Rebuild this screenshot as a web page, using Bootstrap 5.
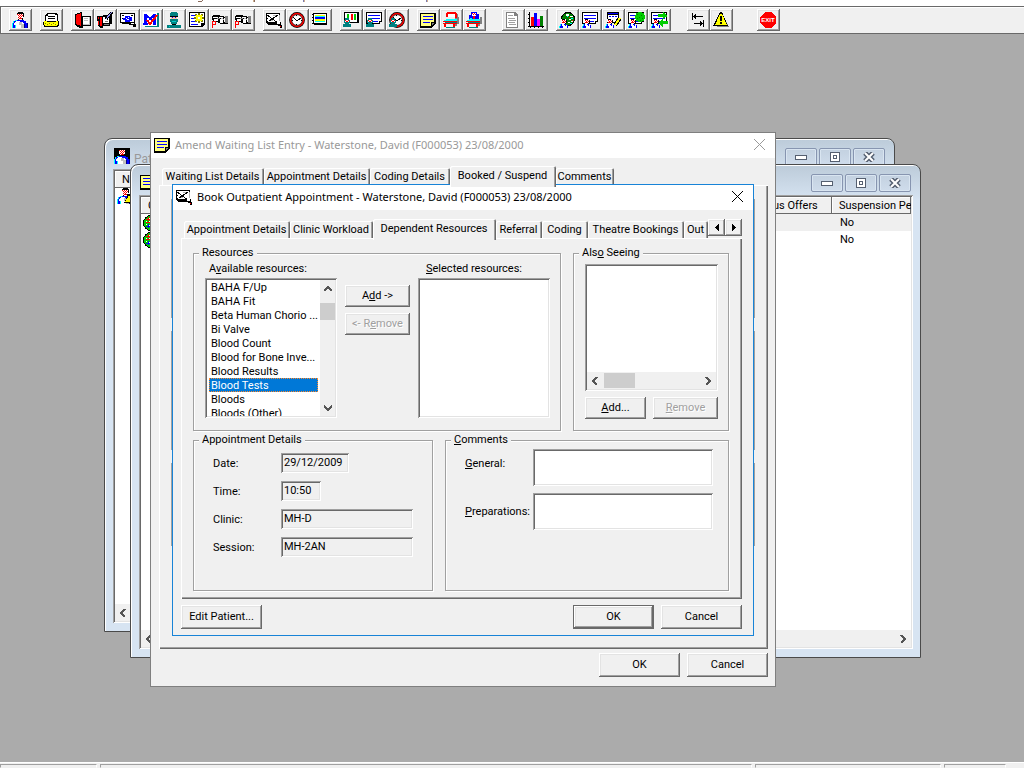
<!DOCTYPE html>
<html lang="en">
<head>
<meta charset="utf-8">
<meta name="viewport" content="width=device-width, initial-scale=1">
<title>Book Outpatient Appointment</title>
<link href="https://cdn.jsdelivr.net/npm/bootstrap@5.3.0/dist/css/bootstrap.min.css" rel="stylesheet">
<style>
  :root { --face:#f0f0f0; --shade:#a0a0a0; --dark:#696969; --lite:#e3e3e3; --frame:#d7e4f2; --accent:#1883d7; }
  body { font:11px/14px Roboto,"Liberation Sans",sans-serif; color:#000; background:#ababab; overflow:hidden; }
  button, input, textarea, select { font:inherit; color:inherit; border-radius:0; }
  svg { shape-rendering:crispEdges; display:block; flex:none; }
  u { text-underline-offset:1px; }

  /* bevels */
  .raised { background:var(--face); border:0; padding:0 6px; white-space:nowrap; box-shadow:inset -1px -1px 0 var(--dark), inset 1px 1px 0 #fff, inset -2px -2px 0 var(--shade), inset 2px 2px 0 var(--lite); }
  .raised:disabled { color:var(--shade); text-shadow:1px 1px 0 #fff; }
  .raised.default { border:1px solid var(--dark); }
  .sunken { border:0; padding:2px; box-shadow:inset 1px 1px 0 var(--shade), inset -1px -1px 0 #fff, inset 2px 2px 0 var(--dark), inset -2px -2px 0 var(--lite); }

  /* application chrome */
  .menu-strip { height:6px; background:#fff; }
  .tool-strip { background:var(--face); border:1px solid var(--dark); border-right:0; padding:2px 8px; height:28px; box-shadow:inset 1px 1px 0 #fff; }
  .tool { width:23px; height:22px; padding:3px; }
  .sp { margin-left:8px; } .sp2 { margin-left:16px; } .sp3 { margin-left:24px; }
  .status-strip { height:6px; background:var(--face); border-top:1px solid #fff; padding:1px 18px 0 0; gap:3px; }
  .status-strip span { border:1px solid; border-color:var(--shade) #fff transparent var(--shade); }
  .w-s { width:97px; } .w-m { width:186px; } .w-x { width:62px; }

  /* child windows */
  .win { position:absolute; display:flex; flex-direction:column; }
  .mdi { width:791px; height:494px; background:var(--frame); border:1px solid #4a4a4a; border-radius:8px 8px 0 0; padding:0 7px 8px 8px; box-shadow:inset 1px 1px 0 #fff; background-image:linear-gradient(#bccbd9,#d7e4f2 36px); background-repeat:no-repeat; overflow:hidden; }
  .mdi-bar { height:30px; padding:9px 2px 0 1px; color:#999; gap:4px; font-size:12px; }
  .cap-btn { width:32px; height:18px; border:1px solid #8795b0; border-radius:2px; background:linear-gradient(#c3d1e0,#cfdceb); padding:0; display:grid; place-items:center; box-shadow:inset 0 0 0 1px #d9e5f1; }
  .mdi-body { background:#fff; flex:1; min-height:0; overflow:hidden; display:flex; flex-direction:column; }
  .grid-tbl { table-layout:fixed; width:100%; border-collapse:separate; border-spacing:0; }
  .grid-tbl th { height:17px; padding:0 7px; font-weight:400; background:var(--face); box-shadow:inset -1px -1px 0 var(--dark), inset 1px 1px 0 #fff; white-space:nowrap; overflow:hidden; }
  .grid-tbl td { height:17px; padding:0 8px; vertical-align:middle; }
  .grid-tbl td:first-child { padding:0 2px; }
  .alt { background:#efefef; }
  .h-scroll { height:17px; background:var(--face); display:flex; align-items:center; justify-content:space-between; padding:0 4px; }

  .dlg { background:var(--face); border:1px solid #7f7f7f; }
  .dlg-bar { background:#fff; height:25px; padding:0 10px 2px 3px; font:11px/14px "Noto Sans",sans-serif; gap:5px; }
  .dlg-bar button { background:none; border:0; padding:0; }
  .off { color:#999; }
  .amend { left:150px; top:98px; width:626px; height:555px; }
  .book { left:172px; top:150px; width:582px; height:452px; border-color:var(--accent); }

  .nav-tabs { border:0; height:19px; align-items:flex-end; flex-wrap:nowrap; position:relative; }
  .nav-tabs .nav-link { height:17px; margin:0; padding:1px 2px 0 1px; border:0; border-radius:2px 2px 0 0; color:#000; background:var(--face); white-space:nowrap; text-align:center; flex:none; box-shadow:inset 1px 1px 0 #fff, inset -1px 0 0 var(--dark), inset -2px 0 0 var(--shade); }
  .nav-tabs .nav-link.active { height:21px; margin:0 0 -2px; padding:1px 2px 3px 1px; z-index:1; background:var(--face); color:#000; }
  .t1 { width:102px; } .t2 { width:106px; } .t3 { width:80px; } .t4 { width:58px; } .t5 { width:83px; } .t6 { width:123px; } .t7 { width:46px; } .t8 { width:96px; } .t9 { width:24px; }
  .spin { width:17px; height:17px; padding:0; display:grid; place-items:center; }
  .page { box-shadow:inset 1px 1px 0 #fff, inset -1px -1px 0 var(--dark), inset -2px -2px 0 var(--shade); }

  fieldset { min-width:0; position:relative; border:1px solid var(--shade); box-shadow:1px 1px 0 #fff, inset 1px 1px 0 #fff; }
  legend { float:none; width:auto; margin:0 0 0 5px; padding:0 3px; font-size:11px; line-height:14px; background:var(--face); }
  .strip { border:1px solid var(--shade); }
  .fs-top { height:185px; } .fs-low { height:158px; }

  .lst { display:flex; background:#fff; width:132px; height:140px; margin-top:2px; }
  .lst.wide { height:127px; width:133px; margin-top:0; flex-direction:column; justify-content:flex-end; }
  .lst select { border:0; outline:0; padding:0 2px; background:#fff; flex:1; min-width:0; overflow:hidden; height:136px; scrollbar-width:none; }
  .lst select::-webkit-scrollbar { display:none; }
  .lst option { padding:1px 0 0 2px; min-height:0; height:14px; line-height:13px; font-size:11px; }
  .lst option:checked { background:linear-gradient(#0078d7,#0078d7); -webkit-text-fill-color:#fff; outline:1px dotted #ff8728; outline-offset:-1px; }
  .v-scroll { width:15px; background:var(--face); display:flex; flex-direction:column; align-items:center; justify-content:space-between; padding:5px 0 4px; position:relative; }
  .v-scroll i { position:absolute; top:23px; left:0; width:15px; height:17px; background:#cdcdcd; }
  .h-scroll i { width:31px; height:15px; background:#cdcdcd; margin:0 auto 0 5px; }
  .b-sm { height:22px; width:65px; } .b-md { height:24px; width:81px; }
  .f-row { display:grid; grid-template-columns:68px 1fr; align-items:center; height:20px; margin-bottom:8px; }
  .f-row label { padding-top:2px; }
  .f-row input { height:20px; background:var(--face); padding:0 2px 1px 3px; }
  .c-row { display:grid; grid-template-columns:68px 180px; align-items:center; margin-bottom:7px; }
  .c-row:first-child label { padding-bottom:7px; }
  .c-row textarea { height:37px; resize:none; background:#fff; }
  .in-date { width:68px; } .in-time { width:40px; } .in-long { width:132px; }
</style>
</head>
<body class="vh-100 d-flex flex-column">

<svg width="0" height="0" class="position-absolute" aria-hidden="true">
  <defs>
    <symbol id="doctor" viewBox="0 0 16 16"><path fill="#00f" d="M4 8h8v1h2v2h1v5H1v-5h1V9h2z"/><path fill="#0ff" d="M0 11h1v5H0zM1 9h1v2H1zM3 8h2v1H3zM3 13h1v3H3z"/><path fill="#fff" d="M4 9h3l3 3 1-3 1 3v4H4v-3H2v-2z"/><path fill="#c0c0c0" d="M7 10h3v2h2v4H9v-3H7z"/><path fill="#fff" d="M5 1h6v6H6V6H5z"/><path fill="#f00" d="M5 2h1v1H5zM7 2h1v1H7zM9 2h1v1H9zM6 3h1v1H6zM8 3h1v1H8zM10 3h1v1h-1zM7 4h1v1H7zM9 4h1v1H9zM6 5h1v1H6zM8 5h1v1H8zM7 6h3v1H7z"/><path d="M6 0h5v1h1v4h-1V2H5V1h1zM6 7h1v1H6zM10 6h1v2h-1z"/><path fill="#000080" d="M15 11h1v5h-1zM12 12h1v4h-1z"/></symbol>
    <symbol id="mini" viewBox="0 0 9 9"><path fill="#fff" d="M2 0h5v5H3z"/><path fill="#f00" d="M3 1h1v1H3zM5 1h1v1H5zM4 2h1v1H4zM6 2h1v1H6zM3 3h3v1H3z"/><path fill="#00f" d="M2 5h5v1h2v3H1V6h1z"/><path fill="#0ff" d="M0 7h1v2H0zM1 5h1v2H1z"/><path fill="#fff" d="M3 5h1l3 3V6h1v3H4z"/><path d="M3 0h3v1H3zM7 1h1v3H7zM6 4h1v1H6z"/></symbol>
    <symbol id="mask" viewBox="0 0 8 9"><path fill="#008080" d="M2 0h4v2h1v3H6v1h2v3H0V6h2V5H1V2h1z"/><path fill="#fff" d="M2 2h4v2H2z"/><path fill="#f00" d="M2 2h1v1H2zM5 2h1v1H5zM3 3h2v1H3z"/></symbol>
    <symbol id="note" viewBox="0 0 16 16"><path d="M0 1h16v10l-4 5H0z"/><path fill="#ffff80" d="M1 2h13v8h-3v4H1z"/><path fill="#00f" d="M3 4h10v1H3zM3 7h10v1H3zM3 10h7v1H3z"/><path fill="#808080" d="M12 11h2v1h-1v1h-1z"/></symbol>
    <symbol id="sheet" viewBox="0 0 16 13"><path d="M0 0h16v10h-2v2H0z"/><path fill="#fff" d="M1 1h14v8h-2v2H1z"/><path fill="#00f" d="M2 3h12v1H2zM2 6h12v1H2zM7 9h5v1H7z"/></symbol>
    <symbol id="clock" viewBox="0 0 16 16"><g shape-rendering="auto"><circle cx="8" cy="8" r="7.9"/><circle cx="8" cy="8" r="7.2" fill="#f00"/><circle cx="8" cy="8" r="5.4" fill="#fff" stroke="#000" stroke-width=".7"/></g><path fill="none" stroke="#000" d="M4 5l4 4 4-3"/><path d="M7 3h1v1H7zM7 12h1v1H7zM3 8h1v1H3zM12 8h1v1h-1z"/></symbol>
    <symbol id="hand" viewBox="0 0 16 16"><path d="M0 4h2v1H0zM1 3h7v1h4v1h4v7H8v-1H6v-1H1V8H0V5z"/><path fill="#fff" d="M1 5h5v1H1zM2 7h4v2H2zM7 5h4v1H7zM8 7h3v4H8zM12 6h1v4h-1z"/><path fill="#808080" d="M13 4h3v7h-3zM5 6h3v1H5z"/><path fill="#c0c0c0" d="M11 7h1v1h-1zM9 6h2v1H9z"/><path fill="#f0f0f0" d="M0 9h4v6H0z"/><path fill="#f00" d="M0 9h4v4H1v3H0zM1 10v2h2v-2z"/></symbol>
    <symbol id="pencilpad" viewBox="0 0 16 16"><path d="M0 1h14v9h1v3h1v3h-2v-2h-2v-1H2v-1H1v-1H0z"/><path fill="#fff" d="M1 2h12v8H2V9H1z"/><path fill="#b0b0b0" d="M7 3h4v1H7zM3 8h4v1H3zM13 3h1v7h-1z"/><path stroke="#000" fill="none" d="M1 3l11 8M12 3L3 9"/><path d="M1 3h1v1H1zM1 6h1v1H1z"/><path fill="#fff" d="M11 7h1v2h2v3h-3z"/><path fill="#f00" d="M14 14h1v1h-1z"/></symbol>
    <symbol id="bed" viewBox="0 0 16 16"><path fill="#808080" d="M14 5h2v7h-2v2h-3v-2h3z"/><path fill="#f00" d="M0 9h14v1H0zM0 11h14v1H0zM1 12h2v3H1zM10 12h2v3h-2z"/><path fill="#0ff" d="M3 7h11v2H1V8h2z"/><path fill="#008080" d="M2 10h12v1H2zM3 15h9v1H3z"/></symbol>
    <symbol id="ball" viewBox="0 0 16 16"><circle cx="8" cy="8" r="8"/><circle cx="8" cy="8" r="7" fill="#0c0"/><path fill="#f00" d="M5 2h1v4H5zM8 1h1v5H8zM11 2h1v4h-1zM3 4h10v1H3zM3 7h10v1H3z"/><path fill="#00f" d="M5 9h1v4H5zM8 9h1v5H8zM11 9h1v4h-1zM3 11h10v1H3z"/><path fill="#fff" d="M6 3h1v1H6zM9 3h1v1H9zM3 6h1v1H3zM6 6h1v1H6zM9 6h1v1H9zM12 6h1v1h-1zM3 9h1v1H3zM6 10h1v1H6zM9 10h1v1H9z"/></symbol>
    <symbol id="a-l" viewBox="0 0 8 8"><path fill="none" stroke="#555" stroke-width="2" d="M6 0L2 4l4 4"/></symbol>
  </defs>
</svg>

<div class="menu-strip flex-shrink-0"><svg width="440" height="3" aria-hidden="true"><path fill="#8a6a5a" d="M198 1h4v1h-4zM202 0h1v1h-1zM254 0h1v2h-1z"/><path fill="#7a7ab0" d="M303 0h1v2h-1zM426 0h1v2h-1z"/><path fill="#d0b090" d="M253 0h1v2h-1zM304 0h1v2h-1zM427 0h1v2h-1z"/></svg></div>

<div class="tool-strip d-flex flex-shrink-0" role="toolbar" aria-label="Main">
  <button class="raised tool" aria-label="Patient"><svg width="16" height="16"><use href="#doctor"/></svg></button>
  <button class="raised tool sp" aria-label="Card index"><svg width="16" height="16"><path d="M4 1h9l2 2v6h1v4l-2 2H1l-1-4 1-2h1V3h2z"/><path fill="#fff" d="M5 2h7v1h2v6H3V4h2z"/><path d="M5 4h7v1H5zM5 6h7v1H5zM3 2h1v2H3z"/><path fill="#ff0" d="M1 9h2l1 1h8l1-1h2v3l-1 2H2l-1-3z"/><path fill="#808000" d="M2 11h1v1H2zM4 12h1v1H4zM6 11h1v1H6zM8 12h1v1H8zM10 11h1v1h-1zM12 12h1v1h-1z"/></svg></button>
  <button class="raised tool sp" aria-label="Records"><svg width="17" height="16"><path d="M1 2l6-2h1v4h9v10H9v2H6l-5-3z"/><path fill="#f00" d="M2 3l5-2v13l-5-2z"/><path fill="#fff" d="M9 5h6v7H9z"/><path fill="#c0c0c0" d="M10 6h4v1h-4zM10 8h4v1h-4zM15 5h1v8H9v-1h6z"/></svg></button>
  <button class="raised tool" aria-label="Edit record"><svg width="16" height="16"><path d="M0 4h6V3h9v9h-2v2H6v2H4l-3-2V9H0z"/><path fill="#fff" d="M6 5h6v6H6z"/><path fill="#f00" d="M1 5h1v2H1zM3 5h2v9H3zM1 9h1v4H1z"/><path fill="#808080" d="M8 9h3v1H8zM7 12h5v1H7z"/><path fill="none" stroke="#000" stroke-width="3" d="M15 0L9 7"/><path fill="none" stroke="#99f" d="M15 0L9 7"/></svg></button>
  <button class="raised tool" aria-label="View notes"><svg width="16" height="16"><path d="M0 1h15v11h1v3h-3v-2H9v-1H2v-1H0z"/><path fill="#fff" d="M1 2h13v8H1z"/><path d="M2 3h2v1H2zM11 3h2v1h-2zM2 6h1v1H2z"/><path fill="#00f" d="M5 4h5v1h2v4h-2v1H5V8H3V6h2z"/><path fill="#fff" d="M6 6h1v1H6zM8 5h1v1H8zM7 7h2v1H7zM11 11h3v1h-3z"/></svg></button>
  <button class="raised tool" aria-label="Master index"><svg width="16" height="16"><path fill="#008080" d="M2 1h14v14H2z"/><path fill="#fff" d="M0 0h14v14H0z"/><path fill="#00f" d="M1 2h3v1h1v1h1v1h2V4h1V3h1V2h3v11h-3V6H9v2H6V6H4v5h1v2H0v-2h1z"/><path fill="none" stroke="#f00" stroke-width="2" d="M4 8l3 4 7-9"/></svg></button>
  <button class="raised tool" aria-label="Surgeon"><svg width="16" height="16"><path fill="#008080" d="M5 0h6v1h1v3H4V1h1z"/><path d="M4 4h8v1H4z"/><path fill="#ffc0a0" d="M5 5h6v2H5z"/><path fill="#00f" d="M6 5h1v1H6zM9 5h1v1H9z"/><path fill="#008080" d="M4 7h8v3h-1v2H5v-2H4z"/><path d="M6 12h4v1H6z"/><path fill="#008080" d="M1 13h14v3H1z"/><path fill="#0cc" d="M6 9h4v1H6zM3 14h1v1H3z"/></svg></button>
  <button class="raised tool" aria-label="New entry"><svg width="16" height="16"><path d="M0 0h16v12l-3 3H0z"/><path fill="#fff" d="M1 1h14v10h-3v3H1z"/><path fill="#00f" d="M2 3h4v1H2zM2 6h3v1H2zM2 9h4v1H2zM2 12h7v1H2z"/><path fill="#808000" d="M9 1h2v10H9zM5 5h10v2H5zM6 2h2v2H6zM12 2h2v2h-2zM6 8h2v2H6zM12 8h2v2h-2z"/><path fill="#ff0" d="M7 3h6v6H7z"/><path fill="#fff" d="M9 5h2v2H9z"/></svg></button>
  <button class="raised tool" aria-label="Referral"><svg width="16" height="16"><use href="#hand"/></svg></button>
  <button class="raised tool" aria-label="Previous referral"><svg width="16" height="16"><use href="#hand"/></svg></button>

  <button class="raised tool sp" aria-label="Book appointment"><svg width="16" height="16"><use href="#pencilpad"/></svg></button>
  <button class="raised tool" aria-label="Clock"><svg width="16" height="16"><use href="#clock"/></svg></button>
  <button class="raised tool" aria-label="Schedule"><svg width="16" height="16"><path d="M1 1h14v12H2v-1H0v-1h1V9H0V8h1V6H0V5h1V3H0V2h1z"/><path fill="#fff" d="M2 2h12v9H2z"/><path fill="#ff0" d="M3 3h10v1H3zM3 7h10v2H3z"/><path fill="#0ff" d="M3 4h10v1H3zM3 9h10v1H3z"/><path fill="#00f" d="M3 5h10v2H3z"/></svg></button>

  <button class="raised tool sp" aria-label="Theatre planner"><svg width="16" height="16"><path d="M1 0h15v11H1z"/><path fill="#fff" d="M2 1h12v9H2z"/><path fill="#0c0" d="M4 2h2v4H4zM11 2h2v6h-2z"/><path fill="#f00" d="M8 2h2v6H8z"/><use href="#mask" x="0" y="6" width="8" height="9"/></svg></button>
  <button class="raised tool" aria-label="Theatre list"><svg width="16" height="16"><use href="#sheet" width="16" height="13"/><use href="#mask" y="6" width="8" height="9"/></svg></button>
  <button class="raised tool" aria-label="Theatre times"><svg width="16" height="16"><use href="#clock"/><use href="#mask" y="6" width="8" height="9"/></svg></button>

  <button class="raised tool sp" aria-label="Waiting list"><svg width="16" height="16"><use href="#note"/></svg></button>
  <button class="raised tool" aria-label="Beds"><svg width="16" height="16"><path fill="#808080" d="M12 2h3v5h-3z"/><path fill="#f00" d="M4 0h9v1h1v5h-2V2H5v3H3V1h1z"/><path fill="#fff" d="M5 2h7v3H5z"/><use href="#bed"/></svg></button>
  <button class="raised tool" aria-label="Admit"><svg width="16" height="16"><use href="#bed"/><path fill="#00f" d="M5 0h6v2h2v5H3V3h2z"/><path fill="#fff" d="M6 1h4v3H6z"/><path fill="#f00" d="M6 1h1v1H6zM8 1h1v1H8zM7 2h1v1H7zM9 2h1v1H9zM7 4h2v3H7z"/><path fill="#0ff" d="M4 6h2v1H4z"/></svg></button>

  <button class="raised tool sp2" aria-label="Document"><svg width="16" height="16"><path fill="#808080" d="M1 0h9l3 3v13H1z"/><path fill="#fff" d="M2 1h7v3h3v11H2z"/><path fill="#a0a0a0" d="M3 3h5v1H3zM3 6h7v1H3zM4 8h7v1H4zM3 10h7v1H3zM4 12h7v1H4z"/></svg></button>
  <button class="raised tool" aria-label="Statistics"><svg width="16" height="16"><path d="M1 0h1v14h14v1h-1v1h-1v-1h-3v1h-1v-1H7v1H6v-1H3v1H2v-1H0v-1h1v-3H0v-1h1V7H0V6h1V3H0V2h1z"/><path fill="#f00" d="M3 5h3v9H3z"/><path fill="#00f" d="M6 1h3v13H6z"/><path fill="#f0f" d="M9 7h3v7H9z"/><path fill="#008000" d="M12 4h3v10h-3z"/></svg></button>

  <button class="raised tool sp" aria-label="Patient map"><svg width="16" height="16"><circle cx="9" cy="7" r="7"/><circle cx="9" cy="7" r="6" fill="#008000"/><path fill="#fff" d="M7 2h3v2H7zM11 4h3v1h-3zM10 7h2v1h-2zM12 9h2v1h-2zM9 10h2v1H9z"/><path fill="#0ff" d="M8 4h1v1H8zM12 6h2v1h-2zM11 11h2v1h-2z"/><path fill="#f00" d="M10 5h1v1h-1zM13 8h1v1h-1z"/><use href="#mini" y="7" width="9" height="9"/></svg></button>
  <button class="raised tool" aria-label="Patient list"><svg width="16" height="16"><use href="#sheet" width="16" height="13"/><use href="#mini" y="7" width="9" height="9"/></svg></button>
  <button class="raised tool" aria-label="Edit patient list"><svg width="16" height="16"><path d="M2 0h12v11H2z"/><path fill="#fff" d="M3 3h10v7H3z"/><path fill="#00f" d="M3 1h10v1H3zM4 4h2v1H4zM7 4h2v1H7zM10 4h2v1h-2z"/><path stroke="#000" stroke-width="4" d="M15 6l-5 7"/><path stroke="#ff0" stroke-width="2" d="M15 6l-5 7"/><use href="#mini" y="7" width="9" height="9"/></svg></button>
  <button class="raised tool" aria-label="Patient offers"><svg width="17" height="16"><use href="#sheet" width="16" height="13"/><circle cx="12" cy="5" r="5" fill="#0c0"/><path fill="#008000" d="M9 2h1v1H9zM13 3h1v1h-1zM11 5h1v1h-1zM14 6h1v1h-1zM12 8h1v1h-1zM9 6h1v1H9z"/><use href="#mini" y="7" width="9" height="9"/></svg></button>
  <button class="raised tool" aria-label="Transfer patient"><svg width="17" height="16"><use href="#sheet" width="16" height="13"/><path fill="#0c0" d="M7 2h5V0l5 4-5 3V5H7zM17 9h-5V7l-5 4 5 4v-3h5z"/><use href="#mini" y="7" width="9" height="9"/></svg></button>

  <button class="raised tool sp2" aria-label="Switch"><svg width="16" height="16"><path d="M2 1h1v7H2zM3 4h1V3h1V2h1v2h7v1H6v2H5V6H4V5H3zM13 8h1v7h-1zM13 12h-1v1h-1v1h-1v-2H4v-1h6V9h1v1h1v1h1z"/></svg></button>
  <button class="raised tool" aria-label="Alerts"><svg width="16" height="16"><path fill="#808080" d="M9 2l7 13H4z"/><path d="M7 0h2l6 14H0z"/><path fill="#ff0" d="M7 2h2l5 11H2z"/><path d="M7 4h2v5H7zM7 10h2v2H7z"/></svg></button>
  <button class="raised tool sp3" aria-label="Exit"><svg width="16" height="16"><path fill="#f00" d="M5 0h6l5 5v6l-5 5H5l-5-5V5z"/><text x="8" y="10" fill="#fff" text-anchor="middle" font-family="Liberation Sans" font-weight="700" font-size="6">EXIT</text></svg></button>
</div>

<main class="flex-grow-1 position-relative overflow-hidden">

  <section class="win mdi" style="left:104px;top:104px">
    <div class="mdi-bar d-flex"><svg width="16" height="16"><path d="M0 0h16v16H0z"/><use href="#doctor" width="16" height="16"/></svg><span class="flex-grow-1 pt-1">Pat</span>
      <div class="d-flex" style="gap:2px"><button class="cap-btn" aria-label="Minimise"><svg width="12" height="5"><path fill="#555f70" d="M0 0h12v5H0z"/><path fill="#fff" d="M1 1h10v3H1z"/></svg></button><button class="cap-btn" aria-label="Restore"><svg width="12" height="10"><path fill="#555f70" d="M1 0h10v10H1z"/><path fill="#fff" d="M2 1h8v8H2z"/><path fill="#555f70" d="M4 3h4v4H4z"/><path fill="#fff" d="M5 4h2v2H5z"/></svg></button><button class="cap-btn" aria-label="Close window"><svg width="12" height="10"><g shape-rendering="auto"><path stroke="#555f70" stroke-width="5" d="M2 1l8 8M10 1L2 9"/><path stroke="#fff" stroke-width="2" d="M2 1l8 8M10 1L2 9"/></g></svg></button></div>
    </div>
    <div class="mdi-body sunken">
      <div class="flex-grow-1"><table class="grid-tbl"><thead><tr><th>N.</th></tr></thead><tbody><tr><td><svg width="17" height="17"><use href="#doctor" width="16" height="16"/><path d="M12 5l5 10H7z"/><path fill="#ff0" d="M12 7l4 7H8z"/></svg></td></tr></tbody></table></div>
      <div class="h-scroll"><svg width="8" height="8"><use href="#a-l"/></svg></div>
    </div>
  </section>

  <section class="win mdi" style="left:130px;top:130px">
    <div class="mdi-bar d-flex"><svg width="16" height="16"><use href="#note"/></svg><span class="flex-grow-1"></span>
      <div class="d-flex" style="gap:2px"><button class="cap-btn" aria-label="Minimise"><svg width="12" height="5"><path fill="#555f70" d="M0 0h12v5H0z"/><path fill="#fff" d="M1 1h10v3H1z"/></svg></button><button class="cap-btn" aria-label="Restore"><svg width="12" height="10"><path fill="#555f70" d="M1 0h10v10H1z"/><path fill="#fff" d="M2 1h8v8H2z"/><path fill="#555f70" d="M4 3h4v4H4z"/><path fill="#fff" d="M5 4h2v2H5z"/></svg></button><button class="cap-btn" aria-label="Close window"><svg width="12" height="10"><g shape-rendering="auto"><path stroke="#555f70" stroke-width="5" d="M2 1l8 8M10 1L2 9"/><path stroke="#fff" stroke-width="2" d="M2 1l8 8M10 1L2 9"/></g></svg></button></div>
    </div>
    <div class="mdi-body sunken">
      <div class="flex-grow-1"><table class="grid-tbl">
        <colgroup><col><col style="width:66px"><col style="width:79px"></colgroup>
        <thead><tr><th>C</th><th>us Offers</th><th class="pe-0">Suspension Pe</th></tr></thead>
        <tbody>
          <tr><td><svg width="16" height="16"><use href="#ball"/></svg></td><td class="alt"></td><td class="alt">No</td></tr>
          <tr><td><svg width="16" height="16"><use href="#ball"/></svg></td><td></td><td>No</td></tr>
        </tbody></table></div>
      <div class="h-scroll"><svg width="8" height="8"><use href="#a-l"/></svg><svg width="8" height="8"><use href="#a-l" transform="rotate(180 4 4)"/></svg></div>
    </div>
  </section>

  <section class="win dlg amend" role="dialog" aria-labelledby="t1">
    <div class="dlg-bar off d-flex align-items-center"><svg width="16" height="16"><use href="#note"/></svg><span id="t1" class="flex-grow-1">Amend Waiting List Entry - Waterstone, David (F000053) 23/08/2000</span><button aria-label="Close"><svg width="11" height="11"><path stroke="#999" d="M0 0l11 11M11 0L0 11" shape-rendering="auto"/></svg></button></div>
    <div class="d-flex flex-column flex-grow-1" style="padding:8px 7px 0 8px">
      <nav class="nav nav-tabs" style="padding-left:3px"><button class="nav-link t1">Waiting List Details</button><button class="nav-link t2">Appointment Details</button><button class="nav-link t3">Coding Details</button><button class="nav-link active t2">Booked / Suspend</button><button class="nav-link t4">Comments</button></nav>
      <div class="page flex-grow-1 d-flex flex-column" style="padding:14px 13px 103px 12px;gap:13px"><div class="strip flex-grow-1"></div><div class="strip flex-grow-1"></div><div class="strip" style="height:83px"></div></div>
      <div class="d-flex justify-content-end" style="gap:7px;padding:4px 0 9px"><button class="raised b-md">OK</button><button class="raised b-md">Cancel</button></div>
    </div>
  </section>

  <section class="win dlg book" role="dialog" aria-labelledby="t2">
    <div class="dlg-bar d-flex align-items-center"><svg width="16" height="16"><use href="#pencilpad"/></svg><span id="t2" class="flex-grow-1">Book Outpatient Appointment - Waterstone, David (F000053) 23/08/2000</span><button aria-label="Close"><svg width="11" height="11"><path stroke="#000" d="M0 0l11 11M11 0L0 11" shape-rendering="auto"/></svg></button></div>
    <div class="d-flex flex-column flex-grow-1" style="padding:9px 11px 6px 8px">
      <div class="d-flex">
        <nav class="nav nav-tabs flex-grow-1" style="min-width:0;padding-left:3px"><button class="nav-link t2">Appointment Details</button><button class="nav-link t5">Clinic Workload</button><button class="nav-link active t6">Dependent Resources</button><button class="nav-link t7">Referral</button><button class="nav-link t7">Coding</button><button class="nav-link t8">Theatre Bookings</button><button class="nav-link t9">Out</button></nav>
        <button class="raised spin" aria-label="Scroll tabs left"><svg width="4" height="7"><path d="M4 0v7L0 4V3z"/></svg></button><button class="raised spin" aria-label="Scroll tabs right"><svg width="4" height="7"><path d="M0 0v7l4-3V3z"/></svg></button>
      </div>
      <div class="page flex-grow-1" style="padding:8px 13px 8px 12px">
        <div class="d-flex" style="gap:12px">
          <fieldset class="fs-top flex-grow-1"><legend>Resources</legend>
            <div class="d-flex" style="padding:2px 0 0 11px;gap:8px">
              <div><label for="avail" class="d-block px-1">A<u>v</u>ailable resources:</label>
                <div class="lst sunken">
                  <select id="avail" size="10"><option>BAHA F/Up</option><option>BAHA Fit</option><option>Beta Human Chorio ...</option><option>Bi Valve</option><option>Blood Count</option><option>Blood for Bone Inve...</option><option>Blood Results</option><option selected>Blood Tests</option><option>Bloods</option><option>Bloods (Other)</option></select>
                  <div class="v-scroll"><svg width="8" height="8"><use href="#a-l" transform="rotate(90 4 4)"/></svg><i></i><svg width="8" height="8"><use href="#a-l" transform="rotate(-90 4 4)"/></svg></div>
                </div></div>
              <div class="d-flex flex-column" style="gap:6px;padding-top:23px"><button class="raised b-sm">A<u>d</u>d -&gt;</button><button class="raised b-sm" disabled>&lt;- R<u>e</u>move</button></div>
              <div><label for="sel" class="d-block px-2"><u>S</u>elected resources:</label>
                <div class="lst sunken"><select id="sel" size="10"></select></div></div>
            </div>
          </fieldset>
          <fieldset class="fs-top" style="width:156px"><legend>Als<u>o</u> Seeing</legend>
            <div style="padding:4px 10px 0 11px">
              <div class="lst wide sunken"><div class="h-scroll"><svg width="8" height="8"><use href="#a-l"/></svg><i></i><svg width="8" height="8"><use href="#a-l" transform="rotate(180 4 4)"/></svg></div></div>
              <div class="d-flex" style="gap:7px;padding-top:6px"><button class="raised b-sm" style="width:61px"><u>A</u>dd...</button><button class="raised b-sm" disabled><u>R</u>emove</button></div>
            </div>
          </fieldset>
        </div>
        <div class="d-flex" style="gap:12px;padding-top:2px">
          <fieldset class="fs-low" style="width:240px"><legend>Appointment Details</legend>
            <div style="padding:6px 0 0 19px">
              <div class="f-row"><label for="d">Date:</label><input id="d" class="sunken in-date" value="29/12/2009" readonly></div>
              <div class="f-row"><label for="t">Time:</label><input id="t" class="sunken in-time" value="10:50" readonly></div>
              <div class="f-row"><label for="c">Clinic:</label><input id="c" class="sunken in-long" value="MH-D" readonly></div>
              <div class="f-row"><label for="s">Session:</label><input id="s" class="sunken in-long" value="MH-2AN" readonly></div>
            </div>
          </fieldset>
          <fieldset class="fs-low flex-grow-1"><legend><u>C</u>omments</legend>
            <div style="padding:2px 0 0 19px">
              <div class="c-row"><label for="g"><u>G</u>eneral:</label><textarea id="g" class="sunken"></textarea></div>
              <div class="c-row"><label for="p"><u>P</u>reparations:</label><textarea id="p" class="sunken"></textarea></div>
            </div>
          </fieldset>
        </div>
      </div>
      <div class="d-flex" style="gap:7px;padding-top:6px"><button class="raised b-md me-auto">Edit Patient...</button><button class="raised b-md default">OK</button><button class="raised b-md">Cancel</button></div>
    </div>
  </section>
</main>

<footer class="status-strip d-flex flex-shrink-0"><span class="w-s"></span><span class="flex-grow-1"></span><span class="w-m"></span><span class="w-x"></span></footer>
<script src="https://cdn.jsdelivr.net/npm/bootstrap@5.3.0/dist/js/bootstrap.bundle.min.js"></script>
</body>
</html>
